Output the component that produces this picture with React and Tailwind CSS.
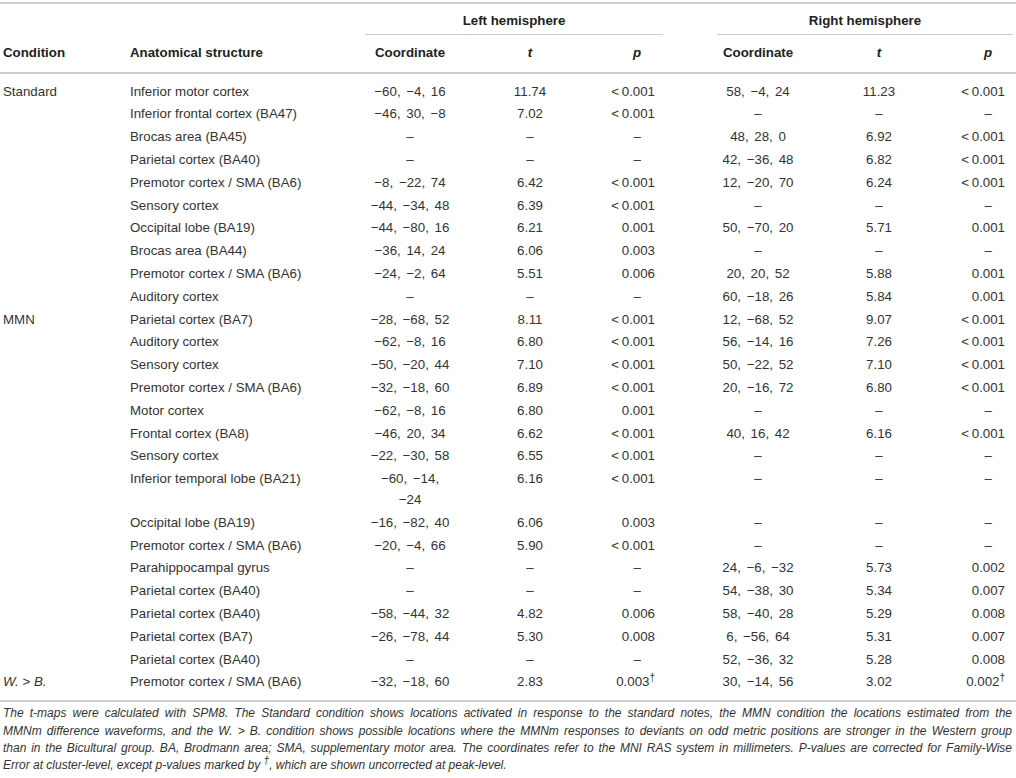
import React from "react";

// one row per anatomical structure; null means no cluster ("–")
const rows = [
	{ cond: "Standard", area: "Inferior motor cortex", l: ["−60, −4, 16", "11.74", "<0.001"], r: ["58, −4, 24", "11.23", "<0.001"] },
	{ area: "Inferior frontal cortex (BA47)", l: ["−46, 30, −8", "7.02", "<0.001"], r: null },
	{ area: "Brocas area (BA45)", l: null, r: ["48, 28, 0", "6.92", "<0.001"] },
	{ area: "Parietal cortex (BA40)", l: null, r: ["42, −36, 48", "6.82", "<0.001"] },
	{ area: "Premotor cortex / SMA (BA6)", l: ["−8, −22, 74", "6.42", "<0.001"], r: ["12, −20, 70", "6.24", "<0.001"] },
	{ area: "Sensory cortex", l: ["−44, −34, 48", "6.39", "<0.001"], r: null },
	{ area: "Occipital lobe (BA19)", l: ["−44, −80, 16", "6.21", "0.001"], r: ["50, −70, 20", "5.71", "0.001"] },
	{ area: "Brocas area (BA44)", l: ["−36, 14, 24", "6.06", "0.003"], r: null },
	{ area: "Premotor cortex / SMA (BA6)", l: ["−24, −2, 64", "5.51", "0.006"], r: ["20, 20, 52", "5.88", "0.001"] },
	{ area: "Auditory cortex", l: null, r: ["60, −18, 26", "5.84", "0.001"] },
	{ cond: "MMN", area: "Parietal cortex (BA7)", l: ["−28, −68, 52", "8.11", "<0.001"], r: ["12, −68, 52", "9.07", "<0.001"] },
	{ area: "Auditory cortex", l: ["−62, −8, 16", "6.80", "<0.001"], r: ["56, −14, 16", "7.26", "<0.001"] },
	{ area: "Sensory cortex", l: ["−50, −20, 44", "7.10", "<0.001"], r: ["50, −22, 52", "7.10", "<0.001"] },
	{ area: "Premotor cortex / SMA (BA6)", l: ["−32, −18, 60", "6.89", "<0.001"], r: ["20, −16, 72", "6.80", "<0.001"] },
	{ area: "Motor cortex", l: ["−62, −8, 16", "6.80", "0.001"], r: null },
	{ area: "Frontal cortex (BA8)", l: ["−46, 20, 34", "6.62", "<0.001"], r: ["40, 16, 42", "6.16", "<0.001"] },
	{ area: "Sensory cortex", l: ["−22, −30, 58", "6.55", "<0.001"], r: null },
	{ area: "Inferior temporal lobe (BA21)", l: ["−60, −14,|−24", "6.16", "<0.001"], r: null },
	{ area: "Occipital lobe (BA19)", l: ["−16, −82, 40", "6.06", "0.003"], r: null },
	{ area: "Premotor cortex / SMA (BA6)", l: ["−20, −4, 66", "5.90", "<0.001"], r: null },
	{ area: "Parahippocampal gyrus", l: null, r: ["24, −6, −32", "5.73", "0.002"] },
	{ area: "Parietal cortex (BA40)", l: null, r: ["54, −38, 30", "5.34", "0.007"] },
	{ area: "Parietal cortex (BA40)", l: ["−58, −44, 32", "4.82", "0.006"], r: ["58, −40, 28", "5.29", "0.008"] },
	{ area: "Parietal cortex (BA7)", l: ["−26, −78, 44", "5.30", "0.008"], r: ["6, −56, 64", "5.31", "0.007"] },
	{ area: "Parietal cortex (BA40)", l: null, r: ["52, −36, 32", "5.28", "0.008"] },
	{ cond: "wb", area: "Premotor cortex / SMA (BA6)", l: ["−32, −18, 60", "2.83", "0.003†"], r: ["30, −14, 56", "3.02", "0.002†"] },
];

const DASH = "–";

const Coord = ({ v }) => {
	if (!v) return DASH;
	return v.split("|").map((p, i) => (
		<React.Fragment key={i}>
			{i > 0 && <br />}
			{p}
		</React.Fragment>
	));
};

const PValue = ({ v }) => {
	const dag = v.endsWith("†");
	const base = dag ? v.slice(0, -1) : v;
	return (
		<>
			{base.startsWith("<") ? <>{"<"}&#8201;{base.slice(1)}</> : base}
			{dag && <sup className="text-[10px]">†</sup>}
		</>
	);
};

const Hemi = ({ d, side, pad }) => {
	const isRight = side === "r";
	return (
		<>
			<td className={`${pad} text-center [word-spacing:2px]`}>
				<Coord v={d ? d[0] : null} />
			</td>
			<td className={`${pad} text-center`}>{d ? d[1] : DASH}</td>
			<td
				className={`${pad} text-right ${
					d
						? isRight
							? "pr-[11px]"
							: "pr-2"
						: isRight
						? "pr-[24px]"
						: "pr-[22px]"
				}`}
			>
				{d ? <PValue v={d[2]} /> : DASH}
			</td>
		</>
	);
};

const App = () => {
	return (
		<div className="w-[1016px] min-h-[778px] bg-white text-[#333] font-['Liberation_Sans',Arial,sans-serif]">
			<div className="h-[2px]" />
			<table className="w-[1016px] table-fixed border-separate border-spacing-0 border-t-2 border-[#cccccc] text-[13.3px] leading-[20.8px]">
				<colgroup>
					<col className="w-[122px]" />
					<col className="w-[243px]" />
					<col className="w-[90px]" />
					<col className="w-[150px]" />
					<col className="w-[58px]" />
					<col className="w-[54px]" />
					<col className="w-[82px]" />
					<col className="w-[160px]" />
					<col className="w-[57px]" />
				</colgroup>
				<thead className="text-[#222] font-bold">
					<tr>
						<th className="pt-[7px]" colSpan={2} />
						<th className="pt-[7px] font-bold" colSpan={3}>
							<div className="pb-[2px] border-b border-[#cccccc]">Left hemisphere</div>
						</th>
						<th className="pt-[7px]" />
						<th className="pt-[7px] font-bold" colSpan={3}>
							<div className="pb-[2px] mr-[3px] border-b border-[#cccccc]">Right hemisphere</div>
						</th>
					</tr>
					<tr>
						<th className="pt-[8px] pb-[8px] pl-[3px] text-left border-b-2 border-[#cccccc]">Condition</th>
						<th className="pt-[8px] pb-[8px] pl-2 text-left border-b-2 border-[#cccccc]">Anatomical structure</th>
						<th className="pt-[8px] pb-[8px] text-center border-b-2 border-[#cccccc]">Coordinate</th>
						<th className="pt-[8px] pb-[8px] text-center italic border-b-2 border-[#cccccc]">t</th>
						<th className="pt-[8px] pb-[8px] pr-[22px] text-right italic border-b-2 border-[#cccccc]">p</th>
						<th className="border-b-2 border-[#cccccc]" />
						<th className="pt-[8px] pb-[8px] text-center border-b-2 border-[#cccccc]">Coordinate</th>
						<th className="pt-[8px] pb-[8px] text-center italic border-b-2 border-[#cccccc]">t</th>
						<th className="pt-[8px] pb-[8px] pr-[24px] text-right italic border-b-2 border-[#cccccc]">p</th>
					</tr>
				</thead>
				<tbody>
					{rows.map((row, i) => {
						const first = i === 0;
						const last = i === rows.length - 1;
						const pad = `align-top ${first ? "pt-[8px]" : "pt-px"} ${
							last ? "pb-[7px] border-b-2 border-[#cccccc]" : "pb-px"
						}`;
						return (
							<tr key={i}>
								<td className={`${pad} pl-[3px]`}>
									{row.cond === "wb" ? (
										<>
											<i>W.</i> &gt; <i>B.</i>
										</>
									) : (
										row.cond
									)}
								</td>
								<td className={`${pad} pl-2`}>{row.area}</td>
								<Hemi d={row.l} side="l" pad={pad} />
								<td className={pad} />
								<Hemi d={row.r} side="r" pad={pad} />
							</tr>
						);
					})}
				</tbody>
			</table>
			<div className="mt-[3px] pl-[3px] pr-1 text-[12px] leading-[17.4px] italic text-[#333]">
				<p className="text-justify [text-align-last:justify]">
					The t-maps were calculated with SPM8. The Standard condition shows locations activated in response to the standard notes, the MMN condition the locations estimated from the
				</p>
				<p className="text-justify [text-align-last:justify]">
					MMNm difference waveforms, and the W. &gt; B. condition shows possible locations where the MMNm responses to deviants on odd metric positions are stronger in the Western group
				</p>
				<p className="text-justify [text-align-last:justify]">
					than in the Bicultural group. BA, Brodmann area; SMA, supplementary motor area. The coordinates refer to the MNI RAS system in millimeters. P-values are corrected for Family-Wise
				</p>
				<p>
					Error at cluster-level, except p-values marked by <sup className="text-[10px]">†</sup>, which are shown uncorrected at peak-level.
				</p>
			</div>
		</div>
	);
};

export default App;
